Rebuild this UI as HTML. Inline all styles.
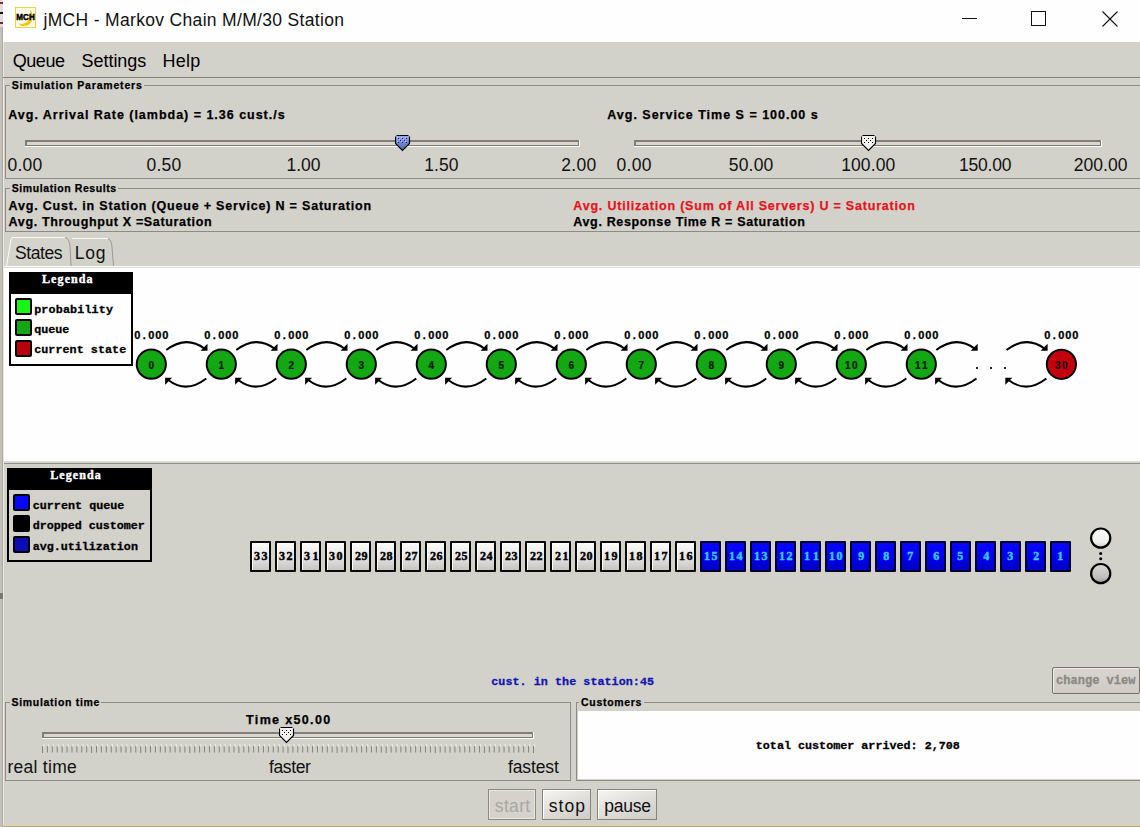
<!DOCTYPE html><html><head><meta charset="utf-8"><title>jMCH</title><style>
*{margin:0;padding:0;box-sizing:border-box}
html,body{width:1140px;height:827px;overflow:hidden;background:#d2d1ca;position:relative}
div,svg{position:absolute}
.t{white-space:nowrap}
</style></head><body>
<div style="left:0;top:0;width:3px;height:827px;background:#c3c1bf"></div><div style="left:2px;top:27px;width:1px;height:800px;background:#aeac98"></div>
<div style="left:3px;top:42px;width:1px;height:785px;background:#eceadf"></div>
<div style="left:0;top:0;width:3px;height:27px;background:#e6dade"></div><div style="left:0;top:2px;width:3px;height:2px;background:#8a2a40"></div><div style="left:0;top:12px;width:3px;height:2px;background:#111"></div><div style="left:0;top:22px;width:3px;height:2px;background:#6a2a3a"></div><div style="left:0;top:593px;width:3px;height:6px;background:#777"></div>
<div style="left:3px;top:0;width:1137px;height:42px;background:#fefefe"></div>
<svg style="left:15px;top:7px" width="21" height="21" viewBox="0 0 21 21"><rect x="0.5" y="0.5" width="20" height="20" fill="#fffbe8" stroke="#ecd24a"/><path d="M15 2.5 C19 7 18.5 15 13 18 C9 20 5 19 3.5 16.5 C7 17.5 11 16.5 13 13.5 C15 10 15.5 6 15 2.5Z" fill="#f2c80c"/><text x="10.6" y="12.9" text-anchor="middle" font-family="Liberation Sans" font-weight="bold" font-size="9.5" fill="#000" stroke="#000" stroke-width="0.5" textLength="18.5" lengthAdjust="spacingAndGlyphs">MCH</text></svg>
<div class="t" style="left:43.50px;top:12.00px;font-family:'Liberation Sans';font-weight:normal;font-size:17.5px;line-height:17.5px;letter-spacing:0.324px;color:#111">jMCH - Markov Chain M/M/30 Station</div>
<div style="left:962px;top:18px;width:15px;height:1px;background:#111"></div>
<div style="left:1031px;top:11px;width:15px;height:15px;border:1px solid #111"></div>
<svg style="left:1102px;top:11px" width="16" height="16"><path d="M0.5 0.5L15.5 15.5M15.5 0.5L0.5 15.5" stroke="#111" stroke-width="1.1"/></svg>
<div class="t" style="left:12.70px;top:51.80px;font-family:'Liberation Sans';font-weight:normal;font-size:18px;line-height:18px;letter-spacing:-0.425px;color:#000">Queue</div>
<div class="t" style="left:81.50px;top:51.80px;font-family:'Liberation Sans';font-weight:normal;font-size:18px;line-height:18px;letter-spacing:-0.029px;color:#000">Settings</div>
<div class="t" style="left:162.50px;top:51.80px;font-family:'Liberation Sans';font-weight:normal;font-size:18px;line-height:18px;letter-spacing:0.267px;color:#000">Help</div>
<div style="left:3px;top:77px;width:1137px;height:1px;background:#84817b"></div>
<div style="left:5px;top:85px;width:1140px;height:94px;border:1px solid #8e8b86"></div>
<div style="left:9.8px;top:79.9px;width:134.2px;height:12px;background:#d2d1ca"></div>
<div class="t" style="left:11.80px;top:79.90px;font-family:'Liberation Sans';font-weight:bold;font-size:10.5px;line-height:10.5px;letter-spacing:0.810px;color:#000;-webkit-text-stroke:0.25px #000">Simulation Parameters</div>
<div class="t" style="left:8.30px;top:108.70px;font-family:'Liberation Sans';font-weight:bold;font-size:12.5px;line-height:12.5px;letter-spacing:0.983px;color:#000;-webkit-text-stroke:0.25px #000">Avg. Arrival Rate (lambda) = 1.36 cust./s</div>
<div class="t" style="left:607.30px;top:108.70px;font-family:'Liberation Sans';font-weight:bold;font-size:12.5px;line-height:12.5px;letter-spacing:0.990px;color:#000;-webkit-text-stroke:0.25px #000">Avg. Service Time S = 100.00 s</div>
<div style="left:25px;top:140px;width:555px;height:7px;background:#fbfbf9"></div>
<div style="left:25px;top:140px;width:554px;height:6px;border-style:solid;border-color:#807d77;border-width:2px 1px 1px 2px;background:#d8d5cf"></div>
<div style="left:634px;top:140px;width:468px;height:7px;background:#fbfbf9"></div>
<div style="left:634px;top:140px;width:467px;height:6px;border-style:solid;border-color:#807d77;border-width:2px 1px 1px 2px;background:#d8d5cf"></div>
<svg style="left:395px;top:135px" width="16" height="17" viewBox="0 0 16 17"><defs><linearGradient id="gb" x1="0" y1="0" x2="0" y2="1"><stop offset="0" stop-color="#9aa8f0"/><stop offset="1" stop-color="#4a64b0"/></linearGradient></defs><path d="M1 1H14V8.5L7.5 15L1 8.5Z" fill="url(#gb)"/><path d="M1.5 0.5H13.5M0.5 1.5V8.5L7.5 15.5L14.5 8.5V1.5" fill="none" stroke="#000" stroke-width="1.15"/><rect x="3" y="3" width="1" height="1" fill="#14207a"/><rect x="2" y="2" width="1" height="1" fill="#c0ccff"/><rect x="7" y="3" width="1" height="1" fill="#14207a"/><rect x="6" y="2" width="1" height="1" fill="#c0ccff"/><rect x="11" y="3" width="1" height="1" fill="#14207a"/><rect x="10" y="2" width="1" height="1" fill="#c0ccff"/><rect x="5" y="5" width="1" height="1" fill="#14207a"/><rect x="4" y="4" width="1" height="1" fill="#c0ccff"/><rect x="9" y="5" width="1" height="1" fill="#14207a"/><rect x="8" y="4" width="1" height="1" fill="#c0ccff"/><rect x="3" y="7" width="1" height="1" fill="#14207a"/><rect x="2" y="6" width="1" height="1" fill="#c0ccff"/><rect x="7" y="7" width="1" height="1" fill="#14207a"/><rect x="6" y="6" width="1" height="1" fill="#c0ccff"/><rect x="11" y="7" width="1" height="1" fill="#14207a"/><rect x="10" y="6" width="1" height="1" fill="#c0ccff"/></svg>
<svg style="left:861px;top:135px" width="16" height="17" viewBox="0 0 16 17"><defs><linearGradient id="gb" x1="0" y1="0" x2="0" y2="1"><stop offset="0" stop-color="#9aa8f0"/><stop offset="1" stop-color="#4a64b0"/></linearGradient></defs><path d="M1 1H14V8.5L7.5 15L1 8.5Z" fill="#f2f1ee"/><path d="M1.5 0.5H13.5M0.5 1.5V8.5L7.5 15.5L14.5 8.5V1.5" fill="none" stroke="#000" stroke-width="1.15"/><rect x="3" y="3" width="1" height="1" fill="#000"/><rect x="7" y="3" width="1" height="1" fill="#000"/><rect x="11" y="3" width="1" height="1" fill="#000"/><rect x="5" y="5" width="1" height="1" fill="#000"/><rect x="9" y="5" width="1" height="1" fill="#000"/><rect x="3" y="7" width="1" height="1" fill="#000"/><rect x="7" y="7" width="1" height="1" fill="#000"/><rect x="11" y="7" width="1" height="1" fill="#000"/></svg>
<div class="t" style="left:7.40px;top:156.70px;font-family:'Liberation Sans';font-weight:normal;font-size:17.5px;line-height:17.5px;letter-spacing:0.267px;color:#111">0.00</div>
<div class="t" style="left:146.40px;top:156.70px;font-family:'Liberation Sans';font-weight:normal;font-size:17.5px;line-height:17.5px;letter-spacing:0.267px;color:#111">0.50</div>
<div class="t" style="left:286.50px;top:156.70px;font-family:'Liberation Sans';font-weight:normal;font-size:17.5px;line-height:17.5px;letter-spacing:0.000px;color:#111">1.00</div>
<div class="t" style="left:424.30px;top:156.70px;font-family:'Liberation Sans';font-weight:normal;font-size:17.5px;line-height:17.5px;letter-spacing:0.033px;color:#111">1.50</div>
<div class="t" style="left:561.30px;top:156.70px;font-family:'Liberation Sans';font-weight:normal;font-size:17.5px;line-height:17.5px;letter-spacing:0.333px;color:#111">2.00</div>
<div class="t" style="left:616.50px;top:156.70px;font-family:'Liberation Sans';font-weight:normal;font-size:17.5px;line-height:17.5px;letter-spacing:0.300px;color:#111">0.00</div>
<div class="t" style="left:728.80px;top:156.70px;font-family:'Liberation Sans';font-weight:normal;font-size:17.5px;line-height:17.5px;letter-spacing:0.175px;color:#111">50.00</div>
<div class="t" style="left:841.20px;top:156.70px;font-family:'Liberation Sans';font-weight:normal;font-size:17.5px;line-height:17.5px;letter-spacing:0.100px;color:#111">100.00</div>
<div class="t" style="left:959.00px;top:156.70px;font-family:'Liberation Sans';font-weight:normal;font-size:17.5px;line-height:17.5px;letter-spacing:-0.220px;color:#111">150.00</div>
<div class="t" style="left:1073.80px;top:156.70px;font-family:'Liberation Sans';font-weight:normal;font-size:17.5px;line-height:17.5px;letter-spacing:0.040px;color:#111">200.00</div>
<div style="left:5px;top:188px;width:1140px;height:44px;border:1px solid #8e8b86"></div>
<div style="left:9.7px;top:183.2px;width:108.0px;height:12px;background:#d2d1ca"></div>
<div class="t" style="left:11.70px;top:183.20px;font-family:'Liberation Sans';font-weight:bold;font-size:10.5px;line-height:10.5px;letter-spacing:0.588px;color:#000;-webkit-text-stroke:0.25px #000">Simulation Results</div>
<div class="t" style="left:8.60px;top:199.80px;font-family:'Liberation Sans';font-weight:bold;font-size:12.5px;line-height:12.5px;letter-spacing:0.806px;color:#000;-webkit-text-stroke:0.25px #000">Avg. Cust. in Station (Queue + Service) N = Saturation</div>
<div class="t" style="left:8.60px;top:215.80px;font-family:'Liberation Sans';font-weight:bold;font-size:12.5px;line-height:12.5px;letter-spacing:0.657px;color:#000;-webkit-text-stroke:0.25px #000">Avg. Throughput X =Saturation</div>
<div class="t" style="left:573.30px;top:199.80px;font-family:'Liberation Sans';font-weight:bold;font-size:12.5px;line-height:12.5px;letter-spacing:0.798px;color:#e6141e;-webkit-text-stroke:0.25px #e6141e">Avg. Utilization (Sum of All Servers) U = Saturation</div>
<div class="t" style="left:573.30px;top:215.80px;font-family:'Liberation Sans';font-weight:bold;font-size:12.5px;line-height:12.5px;letter-spacing:0.647px;color:#000;-webkit-text-stroke:0.25px #000">Avg. Response Time R = Saturation</div>
<svg style="left:0;top:230px" width="140" height="40"><path d="M6.5 36 L11 9.5 Q11.5 7.5 13 7.5 H65 Q69 8 70 16 L71 36Z" fill="#d4d3cc"/><path d="M71 36 L70 16 Q70.5 8.5 73 8.5 H108 Q111.5 9.5 112 17 L113.5 36Z" fill="#d1d0c9"/><path d="M6.5 36 L11 9.5 Q11.5 7.5 13 7.5 H65" fill="none" stroke="#fbfbf7" stroke-width="1"/><path d="M72 8.5 H108" fill="none" stroke="#fbfbf7" stroke-width="1"/><path d="M65 7.5 Q69 8 70 16 L71 36" fill="none" stroke="#9c9a94" stroke-width="1"/><path d="M108 8.5 Q111.5 9.5 112 17 L113.5 36" fill="none" stroke="#9c9a94" stroke-width="1"/></svg>
<div class="t" style="left:15.00px;top:244.50px;font-family:'Liberation Sans';font-weight:normal;font-size:17.5px;line-height:17.5px;letter-spacing:-0.400px;color:#111">States</div>
<div class="t" style="left:74.80px;top:244.50px;font-family:'Liberation Sans';font-weight:normal;font-size:17.5px;line-height:17.5px;letter-spacing:0.750px;color:#111">Log</div>
<div style="left:4px;top:266px;width:1136px;height:1px;background:#fbfbf8"></div>
<div style="left:4px;top:267px;width:1136px;height:1px;background:#dcdad6"></div>
<div style="left:4px;top:268px;width:1136px;height:193px;background:#fefefe"></div>
<div style="left:4px;top:461px;width:1136px;height:2px;background:#d9d8d4"></div>
<div style="left:4px;top:463px;width:1136px;height:1px;background:#8f8d89"></div>
<div style="left:9px;top:272px;width:123.5px;height:94px;border:2px solid #000;background:#fefefe"></div>
<div style="left:9px;top:272px;width:123.5px;height:22px;background:#000"></div>
<div class="t" style="left:42.00px;top:273.00px;font-family:'Liberation Serif';font-weight:bold;font-size:12px;line-height:12px;letter-spacing:1.100px;color:#fff;-webkit-text-stroke:0.4px #fff">Legenda</div>
<div style="left:14.5px;top:297.5px;width:17px;height:17px;border:2px solid #000;border-radius:2px;background:#16f516"></div>
<div class="t" style="left:34.20px;top:305.40px;font-family:'Liberation Mono';font-weight:bold;font-size:11.7px;line-height:11.7px;letter-spacing:0.160px;color:#000;-webkit-text-stroke:0.3px #000">probability</div>
<div style="left:14.5px;top:318.5px;width:17px;height:17px;border:2px solid #000;border-radius:2px;background:#12a612"></div>
<div class="t" style="left:34.20px;top:324.80px;font-family:'Liberation Mono';font-weight:bold;font-size:11.7px;line-height:11.7px;letter-spacing:0.000px;color:#000;-webkit-text-stroke:0.3px #000">queue</div>
<div style="left:14.5px;top:339.5px;width:17px;height:17px;border:2px solid #000;border-radius:2px;background:#b8000c"></div>
<div class="t" style="left:34.20px;top:345.30px;font-family:'Liberation Mono';font-weight:bold;font-size:11.7px;line-height:11.7px;letter-spacing:0.067px;color:#000;-webkit-text-stroke:0.3px #000">current state</div>
<svg style="left:0;top:0" width="1140" height="470"><path d="M166.3 350 Q186.3 335 204.3 348.5" fill="none" stroke="#000" stroke-width="2"/><path d="M207.5 343.8 L207.5 350.8 L200.5 350.8Z" fill="#000"/><path d="M206.3 378.5 Q186.3 394 168.3 380" fill="none" stroke="#000" stroke-width="2"/><path d="M165.10000000000002 384.8 L165.10000000000002 377.8 L172.10000000000002 377.8Z" fill="#000"/><path d="M236.3 350 Q256.3 335 274.3 348.5" fill="none" stroke="#000" stroke-width="2"/><path d="M277.5 343.8 L277.5 350.8 L270.5 350.8Z" fill="#000"/><path d="M276.3 378.5 Q256.3 394 238.3 380" fill="none" stroke="#000" stroke-width="2"/><path d="M235.10000000000002 384.8 L235.10000000000002 377.8 L242.10000000000002 377.8Z" fill="#000"/><path d="M306.3 350 Q326.3 335 344.3 348.5" fill="none" stroke="#000" stroke-width="2"/><path d="M347.5 343.8 L347.5 350.8 L340.5 350.8Z" fill="#000"/><path d="M346.3 378.5 Q326.3 394 308.3 380" fill="none" stroke="#000" stroke-width="2"/><path d="M305.1 384.8 L305.1 377.8 L312.1 377.8Z" fill="#000"/><path d="M376.3 350 Q396.3 335 414.3 348.5" fill="none" stroke="#000" stroke-width="2"/><path d="M417.5 343.8 L417.5 350.8 L410.5 350.8Z" fill="#000"/><path d="M416.3 378.5 Q396.3 394 378.3 380" fill="none" stroke="#000" stroke-width="2"/><path d="M375.1 384.8 L375.1 377.8 L382.1 377.8Z" fill="#000"/><path d="M446.3 350 Q466.3 335 484.3 348.5" fill="none" stroke="#000" stroke-width="2"/><path d="M487.5 343.8 L487.5 350.8 L480.5 350.8Z" fill="#000"/><path d="M486.3 378.5 Q466.3 394 448.3 380" fill="none" stroke="#000" stroke-width="2"/><path d="M445.1 384.8 L445.1 377.8 L452.1 377.8Z" fill="#000"/><path d="M516.3 350 Q536.3 335 554.3 348.5" fill="none" stroke="#000" stroke-width="2"/><path d="M557.5 343.8 L557.5 350.8 L550.5 350.8Z" fill="#000"/><path d="M556.3 378.5 Q536.3 394 518.3 380" fill="none" stroke="#000" stroke-width="2"/><path d="M515.1 384.8 L515.1 377.8 L522.1 377.8Z" fill="#000"/><path d="M586.3 350 Q606.3 335 624.3 348.5" fill="none" stroke="#000" stroke-width="2"/><path d="M627.5 343.8 L627.5 350.8 L620.5 350.8Z" fill="#000"/><path d="M626.3 378.5 Q606.3 394 588.3 380" fill="none" stroke="#000" stroke-width="2"/><path d="M585.0999999999999 384.8 L585.0999999999999 377.8 L592.0999999999999 377.8Z" fill="#000"/><path d="M656.3 350 Q676.3 335 694.3 348.5" fill="none" stroke="#000" stroke-width="2"/><path d="M697.5 343.8 L697.5 350.8 L690.5 350.8Z" fill="#000"/><path d="M696.3 378.5 Q676.3 394 658.3 380" fill="none" stroke="#000" stroke-width="2"/><path d="M655.0999999999999 384.8 L655.0999999999999 377.8 L662.0999999999999 377.8Z" fill="#000"/><path d="M726.3 350 Q746.3 335 764.3 348.5" fill="none" stroke="#000" stroke-width="2"/><path d="M767.5 343.8 L767.5 350.8 L760.5 350.8Z" fill="#000"/><path d="M766.3 378.5 Q746.3 394 728.3 380" fill="none" stroke="#000" stroke-width="2"/><path d="M725.0999999999999 384.8 L725.0999999999999 377.8 L732.0999999999999 377.8Z" fill="#000"/><path d="M796.3 350 Q816.3 335 834.3 348.5" fill="none" stroke="#000" stroke-width="2"/><path d="M837.5 343.8 L837.5 350.8 L830.5 350.8Z" fill="#000"/><path d="M836.3 378.5 Q816.3 394 798.3 380" fill="none" stroke="#000" stroke-width="2"/><path d="M795.0999999999999 384.8 L795.0999999999999 377.8 L802.0999999999999 377.8Z" fill="#000"/><path d="M866.3 350 Q886.3 335 904.3 348.5" fill="none" stroke="#000" stroke-width="2"/><path d="M907.5 343.8 L907.5 350.8 L900.5 350.8Z" fill="#000"/><path d="M906.3 378.5 Q886.3 394 868.3 380" fill="none" stroke="#000" stroke-width="2"/><path d="M865.0999999999999 384.8 L865.0999999999999 377.8 L872.0999999999999 377.8Z" fill="#000"/><path d="M936.3 350 Q956.4 335 974.5 348.5" fill="none" stroke="#000" stroke-width="2"/><path d="M977.7 343.8 L977.7 350.8 L970.7 350.8Z" fill="#000"/><path d="M976.5 378.5 Q956.4 394 938.3 380" fill="none" stroke="#000" stroke-width="2"/><path d="M935.0999999999999 384.8 L935.0999999999999 377.8 L942.0999999999999 377.8Z" fill="#000"/><path d="M1006.5 350 Q1026.45 335 1044.4 348.5" fill="none" stroke="#000" stroke-width="2"/><path d="M1047.6000000000001 343.8 L1047.6000000000001 350.8 L1040.6000000000001 350.8Z" fill="#000"/><path d="M1046.4 378.5 Q1026.45 394 1008.5 380" fill="none" stroke="#000" stroke-width="2"/><path d="M1005.3 384.8 L1005.3 377.8 L1012.3 377.8Z" fill="#000"/><circle cx="151.3" cy="364.2" r="14.6" fill="#13a713" stroke="#000" stroke-width="2"/><circle cx="221.3" cy="364.2" r="14.6" fill="#13a713" stroke="#000" stroke-width="2"/><circle cx="291.3" cy="364.2" r="14.6" fill="#13a713" stroke="#000" stroke-width="2"/><circle cx="361.3" cy="364.2" r="14.6" fill="#13a713" stroke="#000" stroke-width="2"/><circle cx="431.3" cy="364.2" r="14.6" fill="#13a713" stroke="#000" stroke-width="2"/><circle cx="501.3" cy="364.2" r="14.6" fill="#13a713" stroke="#000" stroke-width="2"/><circle cx="571.3" cy="364.2" r="14.6" fill="#13a713" stroke="#000" stroke-width="2"/><circle cx="641.3" cy="364.2" r="14.6" fill="#13a713" stroke="#000" stroke-width="2"/><circle cx="711.3" cy="364.2" r="14.6" fill="#13a713" stroke="#000" stroke-width="2"/><circle cx="781.3" cy="364.2" r="14.6" fill="#13a713" stroke="#000" stroke-width="2"/><circle cx="851.3" cy="364.2" r="14.6" fill="#13a713" stroke="#000" stroke-width="2"/><circle cx="921.3" cy="364.2" r="14.6" fill="#13a713" stroke="#000" stroke-width="2"/><circle cx="1061.4" cy="364.3" r="14.6" fill="#c4000e" stroke="#000" stroke-width="2"/><rect x="976" y="367" width="2" height="2" fill="#222"/><rect x="990" y="367" width="2" height="2" fill="#222"/><rect x="1004" y="367" width="2" height="2" fill="#222"/></svg>
<div class="t" style="left:132.30px;top:329.9px;width:10px;text-align:center;font-family:'Liberation Sans';font-weight:bold;font-size:11px;line-height:11px;color:#000;-webkit-text-stroke:0.3px #000">0</div>
<div class="t" style="left:139.30px;top:329.9px;width:10px;text-align:center;font-family:'Liberation Sans';font-weight:bold;font-size:11px;line-height:11px;color:#000;-webkit-text-stroke:0.3px #000">.</div>
<div class="t" style="left:146.30px;top:329.9px;width:10px;text-align:center;font-family:'Liberation Sans';font-weight:bold;font-size:11px;line-height:11px;color:#000;-webkit-text-stroke:0.3px #000">0</div>
<div class="t" style="left:153.30px;top:329.9px;width:10px;text-align:center;font-family:'Liberation Sans';font-weight:bold;font-size:11px;line-height:11px;color:#000;-webkit-text-stroke:0.3px #000">0</div>
<div class="t" style="left:160.30px;top:329.9px;width:10px;text-align:center;font-family:'Liberation Sans';font-weight:bold;font-size:11px;line-height:11px;color:#000;-webkit-text-stroke:0.3px #000">0</div>
<div class="t" style="left:146.30px;top:360.79999999999995px;width:10px;text-align:center;font-family:'Liberation Sans';font-weight:bold;font-size:10px;line-height:10px;color:#061806;-webkit-text-stroke:0.2px #061806">0</div>
<div class="t" style="left:202.30px;top:329.9px;width:10px;text-align:center;font-family:'Liberation Sans';font-weight:bold;font-size:11px;line-height:11px;color:#000;-webkit-text-stroke:0.3px #000">0</div>
<div class="t" style="left:209.30px;top:329.9px;width:10px;text-align:center;font-family:'Liberation Sans';font-weight:bold;font-size:11px;line-height:11px;color:#000;-webkit-text-stroke:0.3px #000">.</div>
<div class="t" style="left:216.30px;top:329.9px;width:10px;text-align:center;font-family:'Liberation Sans';font-weight:bold;font-size:11px;line-height:11px;color:#000;-webkit-text-stroke:0.3px #000">0</div>
<div class="t" style="left:223.30px;top:329.9px;width:10px;text-align:center;font-family:'Liberation Sans';font-weight:bold;font-size:11px;line-height:11px;color:#000;-webkit-text-stroke:0.3px #000">0</div>
<div class="t" style="left:230.30px;top:329.9px;width:10px;text-align:center;font-family:'Liberation Sans';font-weight:bold;font-size:11px;line-height:11px;color:#000;-webkit-text-stroke:0.3px #000">0</div>
<div class="t" style="left:216.30px;top:360.79999999999995px;width:10px;text-align:center;font-family:'Liberation Sans';font-weight:bold;font-size:10px;line-height:10px;color:#061806;-webkit-text-stroke:0.2px #061806">1</div>
<div class="t" style="left:272.30px;top:329.9px;width:10px;text-align:center;font-family:'Liberation Sans';font-weight:bold;font-size:11px;line-height:11px;color:#000;-webkit-text-stroke:0.3px #000">0</div>
<div class="t" style="left:279.30px;top:329.9px;width:10px;text-align:center;font-family:'Liberation Sans';font-weight:bold;font-size:11px;line-height:11px;color:#000;-webkit-text-stroke:0.3px #000">.</div>
<div class="t" style="left:286.30px;top:329.9px;width:10px;text-align:center;font-family:'Liberation Sans';font-weight:bold;font-size:11px;line-height:11px;color:#000;-webkit-text-stroke:0.3px #000">0</div>
<div class="t" style="left:293.30px;top:329.9px;width:10px;text-align:center;font-family:'Liberation Sans';font-weight:bold;font-size:11px;line-height:11px;color:#000;-webkit-text-stroke:0.3px #000">0</div>
<div class="t" style="left:300.30px;top:329.9px;width:10px;text-align:center;font-family:'Liberation Sans';font-weight:bold;font-size:11px;line-height:11px;color:#000;-webkit-text-stroke:0.3px #000">0</div>
<div class="t" style="left:286.30px;top:360.79999999999995px;width:10px;text-align:center;font-family:'Liberation Sans';font-weight:bold;font-size:10px;line-height:10px;color:#061806;-webkit-text-stroke:0.2px #061806">2</div>
<div class="t" style="left:342.30px;top:329.9px;width:10px;text-align:center;font-family:'Liberation Sans';font-weight:bold;font-size:11px;line-height:11px;color:#000;-webkit-text-stroke:0.3px #000">0</div>
<div class="t" style="left:349.30px;top:329.9px;width:10px;text-align:center;font-family:'Liberation Sans';font-weight:bold;font-size:11px;line-height:11px;color:#000;-webkit-text-stroke:0.3px #000">.</div>
<div class="t" style="left:356.30px;top:329.9px;width:10px;text-align:center;font-family:'Liberation Sans';font-weight:bold;font-size:11px;line-height:11px;color:#000;-webkit-text-stroke:0.3px #000">0</div>
<div class="t" style="left:363.30px;top:329.9px;width:10px;text-align:center;font-family:'Liberation Sans';font-weight:bold;font-size:11px;line-height:11px;color:#000;-webkit-text-stroke:0.3px #000">0</div>
<div class="t" style="left:370.30px;top:329.9px;width:10px;text-align:center;font-family:'Liberation Sans';font-weight:bold;font-size:11px;line-height:11px;color:#000;-webkit-text-stroke:0.3px #000">0</div>
<div class="t" style="left:356.30px;top:360.79999999999995px;width:10px;text-align:center;font-family:'Liberation Sans';font-weight:bold;font-size:10px;line-height:10px;color:#061806;-webkit-text-stroke:0.2px #061806">3</div>
<div class="t" style="left:412.30px;top:329.9px;width:10px;text-align:center;font-family:'Liberation Sans';font-weight:bold;font-size:11px;line-height:11px;color:#000;-webkit-text-stroke:0.3px #000">0</div>
<div class="t" style="left:419.30px;top:329.9px;width:10px;text-align:center;font-family:'Liberation Sans';font-weight:bold;font-size:11px;line-height:11px;color:#000;-webkit-text-stroke:0.3px #000">.</div>
<div class="t" style="left:426.30px;top:329.9px;width:10px;text-align:center;font-family:'Liberation Sans';font-weight:bold;font-size:11px;line-height:11px;color:#000;-webkit-text-stroke:0.3px #000">0</div>
<div class="t" style="left:433.30px;top:329.9px;width:10px;text-align:center;font-family:'Liberation Sans';font-weight:bold;font-size:11px;line-height:11px;color:#000;-webkit-text-stroke:0.3px #000">0</div>
<div class="t" style="left:440.30px;top:329.9px;width:10px;text-align:center;font-family:'Liberation Sans';font-weight:bold;font-size:11px;line-height:11px;color:#000;-webkit-text-stroke:0.3px #000">0</div>
<div class="t" style="left:426.30px;top:360.79999999999995px;width:10px;text-align:center;font-family:'Liberation Sans';font-weight:bold;font-size:10px;line-height:10px;color:#061806;-webkit-text-stroke:0.2px #061806">4</div>
<div class="t" style="left:482.30px;top:329.9px;width:10px;text-align:center;font-family:'Liberation Sans';font-weight:bold;font-size:11px;line-height:11px;color:#000;-webkit-text-stroke:0.3px #000">0</div>
<div class="t" style="left:489.30px;top:329.9px;width:10px;text-align:center;font-family:'Liberation Sans';font-weight:bold;font-size:11px;line-height:11px;color:#000;-webkit-text-stroke:0.3px #000">.</div>
<div class="t" style="left:496.30px;top:329.9px;width:10px;text-align:center;font-family:'Liberation Sans';font-weight:bold;font-size:11px;line-height:11px;color:#000;-webkit-text-stroke:0.3px #000">0</div>
<div class="t" style="left:503.30px;top:329.9px;width:10px;text-align:center;font-family:'Liberation Sans';font-weight:bold;font-size:11px;line-height:11px;color:#000;-webkit-text-stroke:0.3px #000">0</div>
<div class="t" style="left:510.30px;top:329.9px;width:10px;text-align:center;font-family:'Liberation Sans';font-weight:bold;font-size:11px;line-height:11px;color:#000;-webkit-text-stroke:0.3px #000">0</div>
<div class="t" style="left:496.30px;top:360.79999999999995px;width:10px;text-align:center;font-family:'Liberation Sans';font-weight:bold;font-size:10px;line-height:10px;color:#061806;-webkit-text-stroke:0.2px #061806">5</div>
<div class="t" style="left:552.30px;top:329.9px;width:10px;text-align:center;font-family:'Liberation Sans';font-weight:bold;font-size:11px;line-height:11px;color:#000;-webkit-text-stroke:0.3px #000">0</div>
<div class="t" style="left:559.30px;top:329.9px;width:10px;text-align:center;font-family:'Liberation Sans';font-weight:bold;font-size:11px;line-height:11px;color:#000;-webkit-text-stroke:0.3px #000">.</div>
<div class="t" style="left:566.30px;top:329.9px;width:10px;text-align:center;font-family:'Liberation Sans';font-weight:bold;font-size:11px;line-height:11px;color:#000;-webkit-text-stroke:0.3px #000">0</div>
<div class="t" style="left:573.30px;top:329.9px;width:10px;text-align:center;font-family:'Liberation Sans';font-weight:bold;font-size:11px;line-height:11px;color:#000;-webkit-text-stroke:0.3px #000">0</div>
<div class="t" style="left:580.30px;top:329.9px;width:10px;text-align:center;font-family:'Liberation Sans';font-weight:bold;font-size:11px;line-height:11px;color:#000;-webkit-text-stroke:0.3px #000">0</div>
<div class="t" style="left:566.30px;top:360.79999999999995px;width:10px;text-align:center;font-family:'Liberation Sans';font-weight:bold;font-size:10px;line-height:10px;color:#061806;-webkit-text-stroke:0.2px #061806">6</div>
<div class="t" style="left:622.30px;top:329.9px;width:10px;text-align:center;font-family:'Liberation Sans';font-weight:bold;font-size:11px;line-height:11px;color:#000;-webkit-text-stroke:0.3px #000">0</div>
<div class="t" style="left:629.30px;top:329.9px;width:10px;text-align:center;font-family:'Liberation Sans';font-weight:bold;font-size:11px;line-height:11px;color:#000;-webkit-text-stroke:0.3px #000">.</div>
<div class="t" style="left:636.30px;top:329.9px;width:10px;text-align:center;font-family:'Liberation Sans';font-weight:bold;font-size:11px;line-height:11px;color:#000;-webkit-text-stroke:0.3px #000">0</div>
<div class="t" style="left:643.30px;top:329.9px;width:10px;text-align:center;font-family:'Liberation Sans';font-weight:bold;font-size:11px;line-height:11px;color:#000;-webkit-text-stroke:0.3px #000">0</div>
<div class="t" style="left:650.30px;top:329.9px;width:10px;text-align:center;font-family:'Liberation Sans';font-weight:bold;font-size:11px;line-height:11px;color:#000;-webkit-text-stroke:0.3px #000">0</div>
<div class="t" style="left:636.30px;top:360.79999999999995px;width:10px;text-align:center;font-family:'Liberation Sans';font-weight:bold;font-size:10px;line-height:10px;color:#061806;-webkit-text-stroke:0.2px #061806">7</div>
<div class="t" style="left:692.30px;top:329.9px;width:10px;text-align:center;font-family:'Liberation Sans';font-weight:bold;font-size:11px;line-height:11px;color:#000;-webkit-text-stroke:0.3px #000">0</div>
<div class="t" style="left:699.30px;top:329.9px;width:10px;text-align:center;font-family:'Liberation Sans';font-weight:bold;font-size:11px;line-height:11px;color:#000;-webkit-text-stroke:0.3px #000">.</div>
<div class="t" style="left:706.30px;top:329.9px;width:10px;text-align:center;font-family:'Liberation Sans';font-weight:bold;font-size:11px;line-height:11px;color:#000;-webkit-text-stroke:0.3px #000">0</div>
<div class="t" style="left:713.30px;top:329.9px;width:10px;text-align:center;font-family:'Liberation Sans';font-weight:bold;font-size:11px;line-height:11px;color:#000;-webkit-text-stroke:0.3px #000">0</div>
<div class="t" style="left:720.30px;top:329.9px;width:10px;text-align:center;font-family:'Liberation Sans';font-weight:bold;font-size:11px;line-height:11px;color:#000;-webkit-text-stroke:0.3px #000">0</div>
<div class="t" style="left:706.30px;top:360.79999999999995px;width:10px;text-align:center;font-family:'Liberation Sans';font-weight:bold;font-size:10px;line-height:10px;color:#061806;-webkit-text-stroke:0.2px #061806">8</div>
<div class="t" style="left:762.30px;top:329.9px;width:10px;text-align:center;font-family:'Liberation Sans';font-weight:bold;font-size:11px;line-height:11px;color:#000;-webkit-text-stroke:0.3px #000">0</div>
<div class="t" style="left:769.30px;top:329.9px;width:10px;text-align:center;font-family:'Liberation Sans';font-weight:bold;font-size:11px;line-height:11px;color:#000;-webkit-text-stroke:0.3px #000">.</div>
<div class="t" style="left:776.30px;top:329.9px;width:10px;text-align:center;font-family:'Liberation Sans';font-weight:bold;font-size:11px;line-height:11px;color:#000;-webkit-text-stroke:0.3px #000">0</div>
<div class="t" style="left:783.30px;top:329.9px;width:10px;text-align:center;font-family:'Liberation Sans';font-weight:bold;font-size:11px;line-height:11px;color:#000;-webkit-text-stroke:0.3px #000">0</div>
<div class="t" style="left:790.30px;top:329.9px;width:10px;text-align:center;font-family:'Liberation Sans';font-weight:bold;font-size:11px;line-height:11px;color:#000;-webkit-text-stroke:0.3px #000">0</div>
<div class="t" style="left:776.30px;top:360.79999999999995px;width:10px;text-align:center;font-family:'Liberation Sans';font-weight:bold;font-size:10px;line-height:10px;color:#061806;-webkit-text-stroke:0.2px #061806">9</div>
<div class="t" style="left:832.30px;top:329.9px;width:10px;text-align:center;font-family:'Liberation Sans';font-weight:bold;font-size:11px;line-height:11px;color:#000;-webkit-text-stroke:0.3px #000">0</div>
<div class="t" style="left:839.30px;top:329.9px;width:10px;text-align:center;font-family:'Liberation Sans';font-weight:bold;font-size:11px;line-height:11px;color:#000;-webkit-text-stroke:0.3px #000">.</div>
<div class="t" style="left:846.30px;top:329.9px;width:10px;text-align:center;font-family:'Liberation Sans';font-weight:bold;font-size:11px;line-height:11px;color:#000;-webkit-text-stroke:0.3px #000">0</div>
<div class="t" style="left:853.30px;top:329.9px;width:10px;text-align:center;font-family:'Liberation Sans';font-weight:bold;font-size:11px;line-height:11px;color:#000;-webkit-text-stroke:0.3px #000">0</div>
<div class="t" style="left:860.30px;top:329.9px;width:10px;text-align:center;font-family:'Liberation Sans';font-weight:bold;font-size:11px;line-height:11px;color:#000;-webkit-text-stroke:0.3px #000">0</div>
<div class="t" style="left:842.80px;top:360.79999999999995px;width:10px;text-align:center;font-family:'Liberation Sans';font-weight:bold;font-size:10px;line-height:10px;color:#061806;-webkit-text-stroke:0.2px #061806">1</div>
<div class="t" style="left:849.80px;top:360.79999999999995px;width:10px;text-align:center;font-family:'Liberation Sans';font-weight:bold;font-size:10px;line-height:10px;color:#061806;-webkit-text-stroke:0.2px #061806">0</div>
<div class="t" style="left:902.30px;top:329.9px;width:10px;text-align:center;font-family:'Liberation Sans';font-weight:bold;font-size:11px;line-height:11px;color:#000;-webkit-text-stroke:0.3px #000">0</div>
<div class="t" style="left:909.30px;top:329.9px;width:10px;text-align:center;font-family:'Liberation Sans';font-weight:bold;font-size:11px;line-height:11px;color:#000;-webkit-text-stroke:0.3px #000">.</div>
<div class="t" style="left:916.30px;top:329.9px;width:10px;text-align:center;font-family:'Liberation Sans';font-weight:bold;font-size:11px;line-height:11px;color:#000;-webkit-text-stroke:0.3px #000">0</div>
<div class="t" style="left:923.30px;top:329.9px;width:10px;text-align:center;font-family:'Liberation Sans';font-weight:bold;font-size:11px;line-height:11px;color:#000;-webkit-text-stroke:0.3px #000">0</div>
<div class="t" style="left:930.30px;top:329.9px;width:10px;text-align:center;font-family:'Liberation Sans';font-weight:bold;font-size:11px;line-height:11px;color:#000;-webkit-text-stroke:0.3px #000">0</div>
<div class="t" style="left:912.80px;top:360.79999999999995px;width:10px;text-align:center;font-family:'Liberation Sans';font-weight:bold;font-size:10px;line-height:10px;color:#061806;-webkit-text-stroke:0.2px #061806">1</div>
<div class="t" style="left:919.80px;top:360.79999999999995px;width:10px;text-align:center;font-family:'Liberation Sans';font-weight:bold;font-size:10px;line-height:10px;color:#061806;-webkit-text-stroke:0.2px #061806">1</div>
<div class="t" style="left:1042.40px;top:329.9px;width:10px;text-align:center;font-family:'Liberation Sans';font-weight:bold;font-size:11px;line-height:11px;color:#000;-webkit-text-stroke:0.3px #000">0</div>
<div class="t" style="left:1049.40px;top:329.9px;width:10px;text-align:center;font-family:'Liberation Sans';font-weight:bold;font-size:11px;line-height:11px;color:#000;-webkit-text-stroke:0.3px #000">.</div>
<div class="t" style="left:1056.40px;top:329.9px;width:10px;text-align:center;font-family:'Liberation Sans';font-weight:bold;font-size:11px;line-height:11px;color:#000;-webkit-text-stroke:0.3px #000">0</div>
<div class="t" style="left:1063.40px;top:329.9px;width:10px;text-align:center;font-family:'Liberation Sans';font-weight:bold;font-size:11px;line-height:11px;color:#000;-webkit-text-stroke:0.3px #000">0</div>
<div class="t" style="left:1070.40px;top:329.9px;width:10px;text-align:center;font-family:'Liberation Sans';font-weight:bold;font-size:11px;line-height:11px;color:#000;-webkit-text-stroke:0.3px #000">0</div>
<div class="t" style="left:1052.90px;top:360.79999999999995px;width:10px;text-align:center;font-family:'Liberation Sans';font-weight:bold;font-size:10px;line-height:10px;color:#200000;-webkit-text-stroke:0.2px #200000">3</div>
<div class="t" style="left:1059.90px;top:360.79999999999995px;width:10px;text-align:center;font-family:'Liberation Sans';font-weight:bold;font-size:10px;line-height:10px;color:#200000;-webkit-text-stroke:0.2px #200000">0</div>
<div style="left:7px;top:468.3px;width:144.6px;height:93.40000000000003px;border:2px solid #000;background:#d2d1ca"></div>
<div style="left:7px;top:468.3px;width:144.6px;height:22px;background:#000"></div>
<div class="t" style="left:50.20px;top:468.90px;font-family:'Liberation Serif';font-weight:bold;font-size:12px;line-height:12px;letter-spacing:1.100px;color:#fff;-webkit-text-stroke:0.4px #fff">Legenda</div>
<div style="left:12.6px;top:493.6px;width:17px;height:17px;border:2px solid #000;border-radius:2px;background:#0808f8"></div>
<div class="t" style="left:32.70px;top:501.00px;font-family:'Liberation Mono';font-weight:bold;font-size:11.7px;line-height:11.7px;letter-spacing:0.042px;color:#000;-webkit-text-stroke:0.3px #000">current queue</div>
<div style="left:12.6px;top:514.6px;width:17px;height:17px;border:2px solid #000;border-radius:2px;background:#000000"></div>
<div class="t" style="left:32.70px;top:520.70px;font-family:'Liberation Mono';font-weight:bold;font-size:11.7px;line-height:11.7px;letter-spacing:-0.007px;color:#000;-webkit-text-stroke:0.3px #000">dropped customer</div>
<div style="left:12.6px;top:535.7px;width:17px;height:17px;border:2px solid #000;border-radius:2px;background:#0c0cb4"></div>
<div class="t" style="left:32.70px;top:541.70px;font-family:'Liberation Mono';font-weight:bold;font-size:11.7px;line-height:11.7px;letter-spacing:0.000px;color:#000;-webkit-text-stroke:0.3px #000">avg.utilization</div>
<div style="left:249.6px;top:540.5px;width:21.5px;height:31.5px;border:2px solid #0a0a0a;border-radius:1px;background:linear-gradient(#fbfbfb,#e6e6e4 50%,#c6c5c2);box-shadow:inset 1px 1px 0 #fff"></div>
<div class="t" style="left:254.05px;top:549.80px;font-family:'Liberation Serif';font-weight:bold;font-size:12px;line-height:12px;letter-spacing:1.500px;color:#000;-webkit-text-stroke:0.45px #000">33</div>
<div style="left:274.6px;top:540.5px;width:21.5px;height:31.5px;border:2px solid #0a0a0a;border-radius:1px;background:linear-gradient(#fbfbfb,#e6e6e4 50%,#c6c5c2);box-shadow:inset 1px 1px 0 #fff"></div>
<div class="t" style="left:279.05px;top:549.80px;font-family:'Liberation Serif';font-weight:bold;font-size:12px;line-height:12px;letter-spacing:1.500px;color:#000;-webkit-text-stroke:0.45px #000">32</div>
<div style="left:299.6px;top:540.5px;width:21.5px;height:31.5px;border:2px solid #0a0a0a;border-radius:1px;background:linear-gradient(#fbfbfb,#e6e6e4 50%,#c6c5c2);box-shadow:inset 1px 1px 0 #fff"></div>
<div class="t" style="left:304.05px;top:549.80px;font-family:'Liberation Serif';font-weight:bold;font-size:12px;line-height:12px;letter-spacing:2.500px;color:#000;-webkit-text-stroke:0.45px #000">31</div>
<div style="left:324.6px;top:540.5px;width:21.5px;height:31.5px;border:2px solid #0a0a0a;border-radius:1px;background:linear-gradient(#fbfbfb,#e6e6e4 50%,#c6c5c2);box-shadow:inset 1px 1px 0 #fff"></div>
<div class="t" style="left:329.05px;top:549.80px;font-family:'Liberation Serif';font-weight:bold;font-size:12px;line-height:12px;letter-spacing:1.500px;color:#000;-webkit-text-stroke:0.45px #000">30</div>
<div style="left:349.6px;top:540.5px;width:21.5px;height:31.5px;border:2px solid #0a0a0a;border-radius:1px;background:linear-gradient(#fbfbfb,#e6e6e4 50%,#c6c5c2);box-shadow:inset 1px 1px 0 #fff"></div>
<div class="t" style="left:355.05px;top:549.80px;font-family:'Liberation Serif';font-weight:bold;font-size:12px;line-height:12px;letter-spacing:0.500px;color:#000;-webkit-text-stroke:0.45px #000">29</div>
<div style="left:374.6px;top:540.5px;width:21.5px;height:31.5px;border:2px solid #0a0a0a;border-radius:1px;background:linear-gradient(#fbfbfb,#e6e6e4 50%,#c6c5c2);box-shadow:inset 1px 1px 0 #fff"></div>
<div class="t" style="left:380.05px;top:549.80px;font-family:'Liberation Serif';font-weight:bold;font-size:12px;line-height:12px;letter-spacing:0.500px;color:#000;-webkit-text-stroke:0.45px #000">28</div>
<div style="left:399.6px;top:540.5px;width:21.5px;height:31.5px;border:2px solid #0a0a0a;border-radius:1px;background:linear-gradient(#fbfbfb,#e6e6e4 50%,#c6c5c2);box-shadow:inset 1px 1px 0 #fff"></div>
<div class="t" style="left:405.05px;top:549.80px;font-family:'Liberation Serif';font-weight:bold;font-size:12px;line-height:12px;letter-spacing:0.500px;color:#000;-webkit-text-stroke:0.45px #000">27</div>
<div style="left:424.6px;top:540.5px;width:21.5px;height:31.5px;border:2px solid #0a0a0a;border-radius:1px;background:linear-gradient(#fbfbfb,#e6e6e4 50%,#c6c5c2);box-shadow:inset 1px 1px 0 #fff"></div>
<div class="t" style="left:430.05px;top:549.80px;font-family:'Liberation Serif';font-weight:bold;font-size:12px;line-height:12px;letter-spacing:0.500px;color:#000;-webkit-text-stroke:0.45px #000">26</div>
<div style="left:449.6px;top:540.5px;width:21.5px;height:31.5px;border:2px solid #0a0a0a;border-radius:1px;background:linear-gradient(#fbfbfb,#e6e6e4 50%,#c6c5c2);box-shadow:inset 1px 1px 0 #fff"></div>
<div class="t" style="left:455.05px;top:549.80px;font-family:'Liberation Serif';font-weight:bold;font-size:12px;line-height:12px;letter-spacing:0.500px;color:#000;-webkit-text-stroke:0.45px #000">25</div>
<div style="left:474.6px;top:540.5px;width:21.5px;height:31.5px;border:2px solid #0a0a0a;border-radius:1px;background:linear-gradient(#fbfbfb,#e6e6e4 50%,#c6c5c2);box-shadow:inset 1px 1px 0 #fff"></div>
<div class="t" style="left:480.05px;top:549.80px;font-family:'Liberation Serif';font-weight:bold;font-size:12px;line-height:12px;letter-spacing:0.500px;color:#000;-webkit-text-stroke:0.45px #000">24</div>
<div style="left:499.6px;top:540.5px;width:21.5px;height:31.5px;border:2px solid #0a0a0a;border-radius:1px;background:linear-gradient(#fbfbfb,#e6e6e4 50%,#c6c5c2);box-shadow:inset 1px 1px 0 #fff"></div>
<div class="t" style="left:505.05px;top:549.80px;font-family:'Liberation Serif';font-weight:bold;font-size:12px;line-height:12px;letter-spacing:0.500px;color:#000;-webkit-text-stroke:0.45px #000">23</div>
<div style="left:524.6px;top:540.5px;width:21.5px;height:31.5px;border:2px solid #0a0a0a;border-radius:1px;background:linear-gradient(#fbfbfb,#e6e6e4 50%,#c6c5c2);box-shadow:inset 1px 1px 0 #fff"></div>
<div class="t" style="left:530.05px;top:549.80px;font-family:'Liberation Serif';font-weight:bold;font-size:12px;line-height:12px;letter-spacing:0.500px;color:#000;-webkit-text-stroke:0.45px #000">22</div>
<div style="left:549.6px;top:540.5px;width:21.5px;height:31.5px;border:2px solid #0a0a0a;border-radius:1px;background:linear-gradient(#fbfbfb,#e6e6e4 50%,#c6c5c2);box-shadow:inset 1px 1px 0 #fff"></div>
<div class="t" style="left:555.05px;top:549.80px;font-family:'Liberation Serif';font-weight:bold;font-size:12px;line-height:12px;letter-spacing:1.500px;color:#000;-webkit-text-stroke:0.45px #000">21</div>
<div style="left:574.6px;top:540.5px;width:21.5px;height:31.5px;border:2px solid #0a0a0a;border-radius:1px;background:linear-gradient(#fbfbfb,#e6e6e4 50%,#c6c5c2);box-shadow:inset 1px 1px 0 #fff"></div>
<div class="t" style="left:580.05px;top:549.80px;font-family:'Liberation Serif';font-weight:bold;font-size:12px;line-height:12px;letter-spacing:0.500px;color:#000;-webkit-text-stroke:0.45px #000">20</div>
<div style="left:599.6px;top:540.5px;width:21.5px;height:31.5px;border:2px solid #0a0a0a;border-radius:1px;background:linear-gradient(#fbfbfb,#e6e6e4 50%,#c6c5c2);box-shadow:inset 1px 1px 0 #fff"></div>
<div class="t" style="left:604.05px;top:549.80px;font-family:'Liberation Serif';font-weight:bold;font-size:12px;line-height:12px;letter-spacing:1.500px;color:#000;-webkit-text-stroke:0.45px #000">19</div>
<div style="left:624.6px;top:540.5px;width:21.5px;height:31.5px;border:2px solid #0a0a0a;border-radius:1px;background:linear-gradient(#fbfbfb,#e6e6e4 50%,#c6c5c2);box-shadow:inset 1px 1px 0 #fff"></div>
<div class="t" style="left:629.05px;top:549.80px;font-family:'Liberation Serif';font-weight:bold;font-size:12px;line-height:12px;letter-spacing:1.500px;color:#000;-webkit-text-stroke:0.45px #000">18</div>
<div style="left:649.6px;top:540.5px;width:21.5px;height:31.5px;border:2px solid #0a0a0a;border-radius:1px;background:linear-gradient(#fbfbfb,#e6e6e4 50%,#c6c5c2);box-shadow:inset 1px 1px 0 #fff"></div>
<div class="t" style="left:654.05px;top:549.80px;font-family:'Liberation Serif';font-weight:bold;font-size:12px;line-height:12px;letter-spacing:1.500px;color:#000;-webkit-text-stroke:0.45px #000">17</div>
<div style="left:674.6px;top:540.5px;width:21.5px;height:31.5px;border:2px solid #0a0a0a;border-radius:1px;background:linear-gradient(#fbfbfb,#e6e6e4 50%,#c6c5c2);box-shadow:inset 1px 1px 0 #fff"></div>
<div class="t" style="left:679.05px;top:549.80px;font-family:'Liberation Serif';font-weight:bold;font-size:12px;line-height:12px;letter-spacing:1.500px;color:#000;-webkit-text-stroke:0.45px #000">16</div>
<div style="left:699.6px;top:540.5px;width:21.5px;height:31.5px;border:2px solid #000028;border-radius:1px;background:linear-gradient(#0606ff,#0000e6 60%,#0000c4)"></div>
<div class="t" style="left:704.05px;top:549.80px;font-family:'Liberation Serif';font-weight:bold;font-size:12px;line-height:12px;letter-spacing:1.500px;color:#38c8ff;-webkit-text-stroke:0.45px #38c8ff">15</div>
<div style="left:724.6px;top:540.5px;width:21.5px;height:31.5px;border:2px solid #000028;border-radius:1px;background:linear-gradient(#0606ff,#0000e6 60%,#0000c4)"></div>
<div class="t" style="left:729.05px;top:549.80px;font-family:'Liberation Serif';font-weight:bold;font-size:12px;line-height:12px;letter-spacing:1.500px;color:#38c8ff;-webkit-text-stroke:0.45px #38c8ff">14</div>
<div style="left:749.6px;top:540.5px;width:21.5px;height:31.5px;border:2px solid #000028;border-radius:1px;background:linear-gradient(#0606ff,#0000e6 60%,#0000c4)"></div>
<div class="t" style="left:754.05px;top:549.80px;font-family:'Liberation Serif';font-weight:bold;font-size:12px;line-height:12px;letter-spacing:1.500px;color:#38c8ff;-webkit-text-stroke:0.45px #38c8ff">13</div>
<div style="left:774.6px;top:540.5px;width:21.5px;height:31.5px;border:2px solid #000028;border-radius:1px;background:linear-gradient(#0606ff,#0000e6 60%,#0000c4)"></div>
<div class="t" style="left:779.05px;top:549.80px;font-family:'Liberation Serif';font-weight:bold;font-size:12px;line-height:12px;letter-spacing:1.500px;color:#38c8ff;-webkit-text-stroke:0.45px #38c8ff">12</div>
<div style="left:799.6px;top:540.5px;width:21.5px;height:31.5px;border:2px solid #000028;border-radius:1px;background:linear-gradient(#0606ff,#0000e6 60%,#0000c4)"></div>
<div class="t" style="left:804.05px;top:549.80px;font-family:'Liberation Serif';font-weight:bold;font-size:12px;line-height:12px;letter-spacing:3.500px;color:#38c8ff;-webkit-text-stroke:0.45px #38c8ff">11</div>
<div style="left:824.6px;top:540.5px;width:21.5px;height:31.5px;border:2px solid #000028;border-radius:1px;background:linear-gradient(#0606ff,#0000e6 60%,#0000c4)"></div>
<div class="t" style="left:829.05px;top:549.80px;font-family:'Liberation Serif';font-weight:bold;font-size:12px;line-height:12px;letter-spacing:1.500px;color:#38c8ff;-webkit-text-stroke:0.45px #38c8ff">10</div>
<div style="left:849.6px;top:540.5px;width:21.5px;height:31.5px;border:2px solid #000028;border-radius:1px;background:linear-gradient(#0606ff,#0000e6 60%,#0000c4)"></div>
<div class="t" style="left:858.30px;top:549.80px;font-family:'Liberation Serif';font-weight:bold;font-size:12px;line-height:12px;letter-spacing:0.000px;color:#38c8ff;-webkit-text-stroke:0.45px #38c8ff">9</div>
<div style="left:874.6px;top:540.5px;width:21.5px;height:31.5px;border:2px solid #000028;border-radius:1px;background:linear-gradient(#0606ff,#0000e6 60%,#0000c4)"></div>
<div class="t" style="left:883.30px;top:549.80px;font-family:'Liberation Serif';font-weight:bold;font-size:12px;line-height:12px;letter-spacing:0.000px;color:#38c8ff;-webkit-text-stroke:0.45px #38c8ff">8</div>
<div style="left:899.6px;top:540.5px;width:21.5px;height:31.5px;border:2px solid #000028;border-radius:1px;background:linear-gradient(#0606ff,#0000e6 60%,#0000c4)"></div>
<div class="t" style="left:907.30px;top:549.80px;font-family:'Liberation Serif';font-weight:bold;font-size:12px;line-height:12px;letter-spacing:0.000px;color:#38c8ff;-webkit-text-stroke:0.45px #38c8ff">7</div>
<div style="left:924.6px;top:540.5px;width:21.5px;height:31.5px;border:2px solid #000028;border-radius:1px;background:linear-gradient(#0606ff,#0000e6 60%,#0000c4)"></div>
<div class="t" style="left:933.30px;top:549.80px;font-family:'Liberation Serif';font-weight:bold;font-size:12px;line-height:12px;letter-spacing:0.000px;color:#38c8ff;-webkit-text-stroke:0.45px #38c8ff">6</div>
<div style="left:949.6px;top:540.5px;width:21.5px;height:31.5px;border:2px solid #000028;border-radius:1px;background:linear-gradient(#0606ff,#0000e6 60%,#0000c4)"></div>
<div class="t" style="left:957.30px;top:549.80px;font-family:'Liberation Serif';font-weight:bold;font-size:12px;line-height:12px;letter-spacing:0.000px;color:#38c8ff;-webkit-text-stroke:0.45px #38c8ff">5</div>
<div style="left:974.6px;top:540.5px;width:21.5px;height:31.5px;border:2px solid #000028;border-radius:1px;background:linear-gradient(#0606ff,#0000e6 60%,#0000c4)"></div>
<div class="t" style="left:983.30px;top:549.80px;font-family:'Liberation Serif';font-weight:bold;font-size:12px;line-height:12px;letter-spacing:0.000px;color:#38c8ff;-webkit-text-stroke:0.45px #38c8ff">4</div>
<div style="left:999.6px;top:540.5px;width:21.5px;height:31.5px;border:2px solid #000028;border-radius:1px;background:linear-gradient(#0606ff,#0000e6 60%,#0000c4)"></div>
<div class="t" style="left:1007.30px;top:549.80px;font-family:'Liberation Serif';font-weight:bold;font-size:12px;line-height:12px;letter-spacing:0.000px;color:#38c8ff;-webkit-text-stroke:0.45px #38c8ff">3</div>
<div style="left:1024.6px;top:540.5px;width:21.5px;height:31.5px;border:2px solid #000028;border-radius:1px;background:linear-gradient(#0606ff,#0000e6 60%,#0000c4)"></div>
<div class="t" style="left:1033.30px;top:549.80px;font-family:'Liberation Serif';font-weight:bold;font-size:12px;line-height:12px;letter-spacing:0.000px;color:#38c8ff;-webkit-text-stroke:0.45px #38c8ff">2</div>
<div style="left:1049.6px;top:540.5px;width:21.5px;height:31.5px;border:2px solid #000028;border-radius:1px;background:linear-gradient(#0606ff,#0000e6 60%,#0000c4)"></div>
<div class="t" style="left:1057.30px;top:549.80px;font-family:'Liberation Serif';font-weight:bold;font-size:12px;line-height:12px;letter-spacing:0.000px;color:#38c8ff;-webkit-text-stroke:0.45px #38c8ff">1</div>
<svg style="left:1085px;top:522px" width="32" height="68"><defs><linearGradient id="c1" x1="0" y1="0" x2="0" y2="1"><stop offset="0" stop-color="#fafafa"/><stop offset="0.7" stop-color="#f0f0ee"/><stop offset="1" stop-color="#c8c8c6"/></linearGradient><linearGradient id="c2" x1="0" y1="0" x2="0" y2="1"><stop offset="0" stop-color="#d8d8d6"/><stop offset="0.7" stop-color="#c0bfbc"/><stop offset="1" stop-color="#9a9996"/></linearGradient></defs><circle cx="15.7" cy="16.1" r="9.6" fill="url(#c1)" stroke="#000" stroke-width="2.2"/><circle cx="15.7" cy="51.6" r="9.6" fill="url(#c2)" stroke="#000" stroke-width="2.2"/><circle cx="15.7" cy="31.4" r="1.5" fill="#000"/><circle cx="15.7" cy="36.7" r="1.5" fill="#000"/></svg>
<div class="t" style="left:491.30px;top:676.60px;font-family:'Liberation Mono';font-weight:bold;font-size:11.7px;line-height:11.7px;letter-spacing:0.064px;color:#1414b4;-webkit-text-stroke:0.3px #1414b4">cust. in the station:45</div>
<div style="left:1052px;top:667px;width:88px;height:26.5px;border:1.5px solid #75726d;border-radius:2px;background:linear-gradient(#d8d5d0,#cfccc6);box-shadow:inset 1px 1px 0 #eeede9"></div>
<div class="t" style="left:1056.10px;top:674.50px;font-family:'Liberation Mono';font-weight:bold;font-size:12px;line-height:12px;letter-spacing:0.010px;color:#8c8984;-webkit-text-stroke:0.3px #8c8984">change view</div>
<div style="left:5px;top:702px;width:566px;height:79px;border:1px solid #8e8b86"></div>
<div style="left:9.5px;top:696.7px;width:91.7px;height:12px;background:#d2d1ca"></div>
<div class="t" style="left:11.50px;top:696.70px;font-family:'Liberation Sans';font-weight:bold;font-size:10.5px;line-height:10.5px;letter-spacing:0.693px;color:#000;-webkit-text-stroke:0.25px #000">Simulation time</div>
<div class="t" style="left:246.10px;top:713.70px;font-family:'Liberation Sans';font-weight:bold;font-size:12.5px;line-height:12.5px;letter-spacing:1.340px;color:#000;-webkit-text-stroke:0.25px #000">Time x50.00</div>
<div style="left:42px;top:732px;width:492px;height:7px;background:#fbfbf9"></div>
<div style="left:42px;top:732px;width:491px;height:6px;border-style:solid;border-color:#807d77;border-width:2px 1px 1px 2px;background:#d8d5cf"></div>
<svg style="left:0;top:740px" width="560" height="16"><rect x="42.00" y="6" width="1" height="7" fill="#85837e"/><rect x="43.00" y="4" width="1.2" height="3" fill="#e9e8e3"/><rect x="46.91" y="6" width="1" height="6.5" fill="#85837e"/><rect x="47.91" y="4" width="1.2" height="3" fill="#e9e8e3"/><rect x="51.82" y="6" width="1" height="6.5" fill="#85837e"/><rect x="52.82" y="4" width="1.2" height="3" fill="#e9e8e3"/><rect x="56.73" y="6" width="1" height="6.5" fill="#85837e"/><rect x="57.73" y="4" width="1.2" height="3" fill="#e9e8e3"/><rect x="61.64" y="6" width="1" height="6.5" fill="#85837e"/><rect x="62.64" y="4" width="1.2" height="3" fill="#e9e8e3"/><rect x="66.55" y="6" width="1" height="6.5" fill="#85837e"/><rect x="67.55" y="4" width="1.2" height="3" fill="#e9e8e3"/><rect x="71.46" y="6" width="1" height="6.5" fill="#85837e"/><rect x="72.46" y="4" width="1.2" height="3" fill="#e9e8e3"/><rect x="76.37" y="6" width="1" height="6.5" fill="#85837e"/><rect x="77.37" y="4" width="1.2" height="3" fill="#e9e8e3"/><rect x="81.28" y="6" width="1" height="6.5" fill="#85837e"/><rect x="82.28" y="4" width="1.2" height="3" fill="#e9e8e3"/><rect x="86.19" y="6" width="1" height="6.5" fill="#85837e"/><rect x="87.19" y="4" width="1.2" height="3" fill="#e9e8e3"/><rect x="91.10" y="6" width="1" height="7" fill="#85837e"/><rect x="92.10" y="4" width="1.2" height="3" fill="#e9e8e3"/><rect x="96.01" y="6" width="1" height="6.5" fill="#85837e"/><rect x="97.01" y="4" width="1.2" height="3" fill="#e9e8e3"/><rect x="100.92" y="6" width="1" height="6.5" fill="#85837e"/><rect x="101.92" y="4" width="1.2" height="3" fill="#e9e8e3"/><rect x="105.83" y="6" width="1" height="6.5" fill="#85837e"/><rect x="106.83" y="4" width="1.2" height="3" fill="#e9e8e3"/><rect x="110.74" y="6" width="1" height="6.5" fill="#85837e"/><rect x="111.74" y="4" width="1.2" height="3" fill="#e9e8e3"/><rect x="115.65" y="6" width="1" height="6.5" fill="#85837e"/><rect x="116.65" y="4" width="1.2" height="3" fill="#e9e8e3"/><rect x="120.56" y="6" width="1" height="6.5" fill="#85837e"/><rect x="121.56" y="4" width="1.2" height="3" fill="#e9e8e3"/><rect x="125.47" y="6" width="1" height="6.5" fill="#85837e"/><rect x="126.47" y="4" width="1.2" height="3" fill="#e9e8e3"/><rect x="130.38" y="6" width="1" height="6.5" fill="#85837e"/><rect x="131.38" y="4" width="1.2" height="3" fill="#e9e8e3"/><rect x="135.29" y="6" width="1" height="6.5" fill="#85837e"/><rect x="136.29" y="4" width="1.2" height="3" fill="#e9e8e3"/><rect x="140.20" y="6" width="1" height="7" fill="#85837e"/><rect x="141.20" y="4" width="1.2" height="3" fill="#e9e8e3"/><rect x="145.11" y="6" width="1" height="6.5" fill="#85837e"/><rect x="146.11" y="4" width="1.2" height="3" fill="#e9e8e3"/><rect x="150.02" y="6" width="1" height="6.5" fill="#85837e"/><rect x="151.02" y="4" width="1.2" height="3" fill="#e9e8e3"/><rect x="154.93" y="6" width="1" height="6.5" fill="#85837e"/><rect x="155.93" y="4" width="1.2" height="3" fill="#e9e8e3"/><rect x="159.84" y="6" width="1" height="6.5" fill="#85837e"/><rect x="160.84" y="4" width="1.2" height="3" fill="#e9e8e3"/><rect x="164.75" y="6" width="1" height="6.5" fill="#85837e"/><rect x="165.75" y="4" width="1.2" height="3" fill="#e9e8e3"/><rect x="169.66" y="6" width="1" height="6.5" fill="#85837e"/><rect x="170.66" y="4" width="1.2" height="3" fill="#e9e8e3"/><rect x="174.57" y="6" width="1" height="6.5" fill="#85837e"/><rect x="175.57" y="4" width="1.2" height="3" fill="#e9e8e3"/><rect x="179.48" y="6" width="1" height="6.5" fill="#85837e"/><rect x="180.48" y="4" width="1.2" height="3" fill="#e9e8e3"/><rect x="184.39" y="6" width="1" height="6.5" fill="#85837e"/><rect x="185.39" y="4" width="1.2" height="3" fill="#e9e8e3"/><rect x="189.30" y="6" width="1" height="7" fill="#85837e"/><rect x="190.30" y="4" width="1.2" height="3" fill="#e9e8e3"/><rect x="194.21" y="6" width="1" height="6.5" fill="#85837e"/><rect x="195.21" y="4" width="1.2" height="3" fill="#e9e8e3"/><rect x="199.12" y="6" width="1" height="6.5" fill="#85837e"/><rect x="200.12" y="4" width="1.2" height="3" fill="#e9e8e3"/><rect x="204.03" y="6" width="1" height="6.5" fill="#85837e"/><rect x="205.03" y="4" width="1.2" height="3" fill="#e9e8e3"/><rect x="208.94" y="6" width="1" height="6.5" fill="#85837e"/><rect x="209.94" y="4" width="1.2" height="3" fill="#e9e8e3"/><rect x="213.85" y="6" width="1" height="6.5" fill="#85837e"/><rect x="214.85" y="4" width="1.2" height="3" fill="#e9e8e3"/><rect x="218.76" y="6" width="1" height="6.5" fill="#85837e"/><rect x="219.76" y="4" width="1.2" height="3" fill="#e9e8e3"/><rect x="223.67" y="6" width="1" height="6.5" fill="#85837e"/><rect x="224.67" y="4" width="1.2" height="3" fill="#e9e8e3"/><rect x="228.58" y="6" width="1" height="6.5" fill="#85837e"/><rect x="229.58" y="4" width="1.2" height="3" fill="#e9e8e3"/><rect x="233.49" y="6" width="1" height="6.5" fill="#85837e"/><rect x="234.49" y="4" width="1.2" height="3" fill="#e9e8e3"/><rect x="238.40" y="6" width="1" height="7" fill="#85837e"/><rect x="239.40" y="4" width="1.2" height="3" fill="#e9e8e3"/><rect x="243.31" y="6" width="1" height="6.5" fill="#85837e"/><rect x="244.31" y="4" width="1.2" height="3" fill="#e9e8e3"/><rect x="248.22" y="6" width="1" height="6.5" fill="#85837e"/><rect x="249.22" y="4" width="1.2" height="3" fill="#e9e8e3"/><rect x="253.13" y="6" width="1" height="6.5" fill="#85837e"/><rect x="254.13" y="4" width="1.2" height="3" fill="#e9e8e3"/><rect x="258.04" y="6" width="1" height="6.5" fill="#85837e"/><rect x="259.04" y="4" width="1.2" height="3" fill="#e9e8e3"/><rect x="262.95" y="6" width="1" height="6.5" fill="#85837e"/><rect x="263.95" y="4" width="1.2" height="3" fill="#e9e8e3"/><rect x="267.86" y="6" width="1" height="6.5" fill="#85837e"/><rect x="268.86" y="4" width="1.2" height="3" fill="#e9e8e3"/><rect x="272.77" y="6" width="1" height="6.5" fill="#85837e"/><rect x="273.77" y="4" width="1.2" height="3" fill="#e9e8e3"/><rect x="277.68" y="6" width="1" height="6.5" fill="#85837e"/><rect x="278.68" y="4" width="1.2" height="3" fill="#e9e8e3"/><rect x="282.59" y="6" width="1" height="6.5" fill="#85837e"/><rect x="283.59" y="4" width="1.2" height="3" fill="#e9e8e3"/><rect x="287.50" y="6" width="1" height="7" fill="#85837e"/><rect x="288.50" y="4" width="1.2" height="3" fill="#e9e8e3"/><rect x="292.41" y="6" width="1" height="6.5" fill="#85837e"/><rect x="293.41" y="4" width="1.2" height="3" fill="#e9e8e3"/><rect x="297.32" y="6" width="1" height="6.5" fill="#85837e"/><rect x="298.32" y="4" width="1.2" height="3" fill="#e9e8e3"/><rect x="302.23" y="6" width="1" height="6.5" fill="#85837e"/><rect x="303.23" y="4" width="1.2" height="3" fill="#e9e8e3"/><rect x="307.14" y="6" width="1" height="6.5" fill="#85837e"/><rect x="308.14" y="4" width="1.2" height="3" fill="#e9e8e3"/><rect x="312.05" y="6" width="1" height="6.5" fill="#85837e"/><rect x="313.05" y="4" width="1.2" height="3" fill="#e9e8e3"/><rect x="316.96" y="6" width="1" height="6.5" fill="#85837e"/><rect x="317.96" y="4" width="1.2" height="3" fill="#e9e8e3"/><rect x="321.87" y="6" width="1" height="6.5" fill="#85837e"/><rect x="322.87" y="4" width="1.2" height="3" fill="#e9e8e3"/><rect x="326.78" y="6" width="1" height="6.5" fill="#85837e"/><rect x="327.78" y="4" width="1.2" height="3" fill="#e9e8e3"/><rect x="331.69" y="6" width="1" height="6.5" fill="#85837e"/><rect x="332.69" y="4" width="1.2" height="3" fill="#e9e8e3"/><rect x="336.60" y="6" width="1" height="7" fill="#85837e"/><rect x="337.60" y="4" width="1.2" height="3" fill="#e9e8e3"/><rect x="341.51" y="6" width="1" height="6.5" fill="#85837e"/><rect x="342.51" y="4" width="1.2" height="3" fill="#e9e8e3"/><rect x="346.42" y="6" width="1" height="6.5" fill="#85837e"/><rect x="347.42" y="4" width="1.2" height="3" fill="#e9e8e3"/><rect x="351.33" y="6" width="1" height="6.5" fill="#85837e"/><rect x="352.33" y="4" width="1.2" height="3" fill="#e9e8e3"/><rect x="356.24" y="6" width="1" height="6.5" fill="#85837e"/><rect x="357.24" y="4" width="1.2" height="3" fill="#e9e8e3"/><rect x="361.15" y="6" width="1" height="6.5" fill="#85837e"/><rect x="362.15" y="4" width="1.2" height="3" fill="#e9e8e3"/><rect x="366.06" y="6" width="1" height="6.5" fill="#85837e"/><rect x="367.06" y="4" width="1.2" height="3" fill="#e9e8e3"/><rect x="370.97" y="6" width="1" height="6.5" fill="#85837e"/><rect x="371.97" y="4" width="1.2" height="3" fill="#e9e8e3"/><rect x="375.88" y="6" width="1" height="6.5" fill="#85837e"/><rect x="376.88" y="4" width="1.2" height="3" fill="#e9e8e3"/><rect x="380.79" y="6" width="1" height="6.5" fill="#85837e"/><rect x="381.79" y="4" width="1.2" height="3" fill="#e9e8e3"/><rect x="385.70" y="6" width="1" height="7" fill="#85837e"/><rect x="386.70" y="4" width="1.2" height="3" fill="#e9e8e3"/><rect x="390.61" y="6" width="1" height="6.5" fill="#85837e"/><rect x="391.61" y="4" width="1.2" height="3" fill="#e9e8e3"/><rect x="395.52" y="6" width="1" height="6.5" fill="#85837e"/><rect x="396.52" y="4" width="1.2" height="3" fill="#e9e8e3"/><rect x="400.43" y="6" width="1" height="6.5" fill="#85837e"/><rect x="401.43" y="4" width="1.2" height="3" fill="#e9e8e3"/><rect x="405.34" y="6" width="1" height="6.5" fill="#85837e"/><rect x="406.34" y="4" width="1.2" height="3" fill="#e9e8e3"/><rect x="410.25" y="6" width="1" height="6.5" fill="#85837e"/><rect x="411.25" y="4" width="1.2" height="3" fill="#e9e8e3"/><rect x="415.16" y="6" width="1" height="6.5" fill="#85837e"/><rect x="416.16" y="4" width="1.2" height="3" fill="#e9e8e3"/><rect x="420.07" y="6" width="1" height="6.5" fill="#85837e"/><rect x="421.07" y="4" width="1.2" height="3" fill="#e9e8e3"/><rect x="424.98" y="6" width="1" height="6.5" fill="#85837e"/><rect x="425.98" y="4" width="1.2" height="3" fill="#e9e8e3"/><rect x="429.89" y="6" width="1" height="6.5" fill="#85837e"/><rect x="430.89" y="4" width="1.2" height="3" fill="#e9e8e3"/><rect x="434.80" y="6" width="1" height="7" fill="#85837e"/><rect x="435.80" y="4" width="1.2" height="3" fill="#e9e8e3"/><rect x="439.71" y="6" width="1" height="6.5" fill="#85837e"/><rect x="440.71" y="4" width="1.2" height="3" fill="#e9e8e3"/><rect x="444.62" y="6" width="1" height="6.5" fill="#85837e"/><rect x="445.62" y="4" width="1.2" height="3" fill="#e9e8e3"/><rect x="449.53" y="6" width="1" height="6.5" fill="#85837e"/><rect x="450.53" y="4" width="1.2" height="3" fill="#e9e8e3"/><rect x="454.44" y="6" width="1" height="6.5" fill="#85837e"/><rect x="455.44" y="4" width="1.2" height="3" fill="#e9e8e3"/><rect x="459.35" y="6" width="1" height="6.5" fill="#85837e"/><rect x="460.35" y="4" width="1.2" height="3" fill="#e9e8e3"/><rect x="464.26" y="6" width="1" height="6.5" fill="#85837e"/><rect x="465.26" y="4" width="1.2" height="3" fill="#e9e8e3"/><rect x="469.17" y="6" width="1" height="6.5" fill="#85837e"/><rect x="470.17" y="4" width="1.2" height="3" fill="#e9e8e3"/><rect x="474.08" y="6" width="1" height="6.5" fill="#85837e"/><rect x="475.08" y="4" width="1.2" height="3" fill="#e9e8e3"/><rect x="478.99" y="6" width="1" height="6.5" fill="#85837e"/><rect x="479.99" y="4" width="1.2" height="3" fill="#e9e8e3"/><rect x="483.90" y="6" width="1" height="7" fill="#85837e"/><rect x="484.90" y="4" width="1.2" height="3" fill="#e9e8e3"/><rect x="488.81" y="6" width="1" height="6.5" fill="#85837e"/><rect x="489.81" y="4" width="1.2" height="3" fill="#e9e8e3"/><rect x="493.72" y="6" width="1" height="6.5" fill="#85837e"/><rect x="494.72" y="4" width="1.2" height="3" fill="#e9e8e3"/><rect x="498.63" y="6" width="1" height="6.5" fill="#85837e"/><rect x="499.63" y="4" width="1.2" height="3" fill="#e9e8e3"/><rect x="503.54" y="6" width="1" height="6.5" fill="#85837e"/><rect x="504.54" y="4" width="1.2" height="3" fill="#e9e8e3"/><rect x="508.45" y="6" width="1" height="6.5" fill="#85837e"/><rect x="509.45" y="4" width="1.2" height="3" fill="#e9e8e3"/><rect x="513.36" y="6" width="1" height="6.5" fill="#85837e"/><rect x="514.36" y="4" width="1.2" height="3" fill="#e9e8e3"/><rect x="518.27" y="6" width="1" height="6.5" fill="#85837e"/><rect x="519.27" y="4" width="1.2" height="3" fill="#e9e8e3"/><rect x="523.18" y="6" width="1" height="6.5" fill="#85837e"/><rect x="524.18" y="4" width="1.2" height="3" fill="#e9e8e3"/><rect x="528.09" y="6" width="1" height="6.5" fill="#85837e"/><rect x="529.09" y="4" width="1.2" height="3" fill="#e9e8e3"/><rect x="533.00" y="6" width="1" height="7" fill="#85837e"/><rect x="534.00" y="4" width="1.2" height="3" fill="#e9e8e3"/></svg>
<svg style="left:279px;top:727px" width="16" height="17" viewBox="0 0 16 17"><defs><linearGradient id="gb" x1="0" y1="0" x2="0" y2="1"><stop offset="0" stop-color="#9aa8f0"/><stop offset="1" stop-color="#4a64b0"/></linearGradient></defs><path d="M1 1H14V8.5L7.5 15L1 8.5Z" fill="#f2f1ee"/><path d="M1.5 0.5H13.5M0.5 1.5V8.5L7.5 15.5L14.5 8.5V1.5" fill="none" stroke="#000" stroke-width="1.15"/><rect x="3" y="3" width="1" height="1" fill="#000"/><rect x="7" y="3" width="1" height="1" fill="#000"/><rect x="11" y="3" width="1" height="1" fill="#000"/><rect x="5" y="5" width="1" height="1" fill="#000"/><rect x="9" y="5" width="1" height="1" fill="#000"/><rect x="3" y="7" width="1" height="1" fill="#000"/><rect x="7" y="7" width="1" height="1" fill="#000"/><rect x="11" y="7" width="1" height="1" fill="#000"/></svg>
<div class="t" style="left:7.50px;top:759.40px;font-family:'Liberation Sans';font-weight:normal;font-size:17.5px;line-height:17.5px;letter-spacing:0.262px;color:#111">real time</div>
<div class="t" style="left:269.00px;top:759.40px;font-family:'Liberation Sans';font-weight:normal;font-size:17.5px;line-height:17.5px;letter-spacing:-0.380px;color:#111">faster</div>
<div class="t" style="left:508.00px;top:759.40px;font-family:'Liberation Sans';font-weight:normal;font-size:17.5px;line-height:17.5px;letter-spacing:-0.133px;color:#111">fastest</div>
<div style="left:575.7px;top:702px;width:570px;height:79px;border:1px solid #8e8b86"></div>
<div style="left:578px;top:711px;width:562px;height:68px;background:#fefefe"></div>
<div style="left:579.1px;top:696.7px;width:64.5px;height:12px;background:#d2d1ca"></div>
<div class="t" style="left:581.10px;top:696.70px;font-family:'Liberation Sans';font-weight:bold;font-size:10.5px;line-height:10.5px;letter-spacing:0.688px;color:#000;-webkit-text-stroke:0.25px #000">Customers</div>
<div class="t" style="left:755.80px;top:741.00px;font-family:'Liberation Mono';font-weight:bold;font-size:11.7px;line-height:11.7px;letter-spacing:0.021px;color:#000;-webkit-text-stroke:0.3px #000">total customer arrived: 2,708</div>
<div style="left:488px;top:789px;width:48px;height:31px;border:1px solid #8c8984;background:#d5d2cc;box-shadow:inset 1px 1px 0 #e8e6e2,inset -1px -1px 0 #e8e6e2"></div>
<div class="t" style="left:494.80px;top:797.80px;font-family:'Liberation Sans';font-weight:normal;font-size:17.5px;line-height:17.5px;letter-spacing:0.350px;color:#a9a7a2">start</div>
<div style="left:542px;top:789px;width:49px;height:31px;border:1px solid #86837e;background:linear-gradient(160deg,#f6f5f3,#dcdad5 60%,#cfccc6);box-shadow:inset 1px 1px 0 #fff"></div>
<div class="t" style="left:548.70px;top:797.80px;font-family:'Liberation Sans';font-weight:normal;font-size:17.5px;line-height:17.5px;letter-spacing:1.067px;color:#111">stop</div>
<div style="left:597px;top:789px;width:60px;height:31px;border:1px solid #86837e;background:linear-gradient(160deg,#f6f5f3,#dcdad5 60%,#cfccc6);box-shadow:inset 1px 1px 0 #fff"></div>
<div class="t" style="left:604.20px;top:797.80px;font-family:'Liberation Sans';font-weight:normal;font-size:17.5px;line-height:17.5px;letter-spacing:-0.200px;color:#111">pause</div>
<div style="left:3px;top:825px;width:1137px;height:1px;background:#ded2b4"></div><div style="left:3px;top:826px;width:1137px;height:1px;background:#b9a874"></div>
</body></html>
